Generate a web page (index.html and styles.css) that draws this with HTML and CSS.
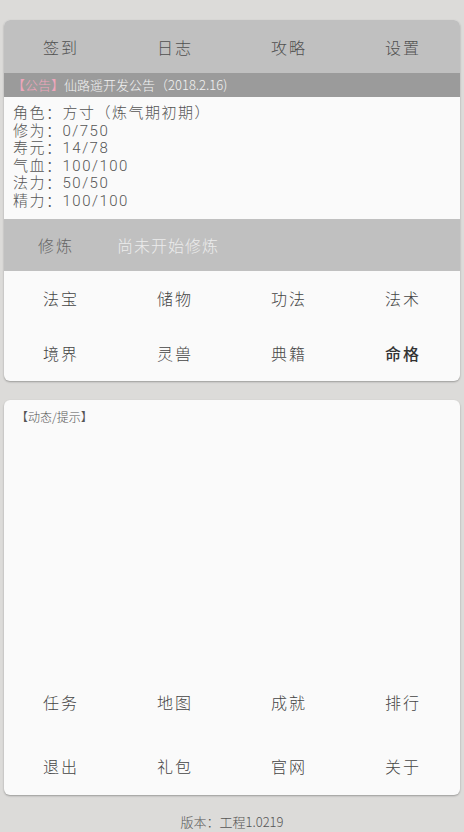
FILE: index.html
```html
<!doctype html>
<html lang="zh">
<head>
	<meta charset="UTF-8" />
	<title>仙路遥</title>
<link rel="stylesheet" href="styles.css">
</head>
<body>
	<section class="card main">
		<nav class="tabs">
			<a href="javascript:;">签到</a>
			<a href="javascript:;">日志</a>
			<a href="javascript:;">攻略</a>
			<a href="javascript:;">设置</a>
		</nav>
		<div class="notice"><span class="tag">【公告】</span>仙路遥开发公告（2018.2.16)</div>
		<ul class="stats">
			<li>角色：方寸（炼气期初期）</li>
			<li>修为：0/750</li>
			<li>寿元：14/78</li>
			<li>气血：100/100</li>
			<li>法力：50/50</li>
			<li>精力：100/100</li>
		</ul>
		<div class="practice">
			<span class="label">修炼</span>
			<span class="state">尚未开始修炼</span>
		</div>
		<div class="menu">
			<a href="javascript:;">法宝</a>
			<a href="javascript:;">储物</a>
			<a href="javascript:;">功法</a>
			<a href="javascript:;">法术</a>
			<a href="javascript:;">境界</a>
			<a href="javascript:;">灵兽</a>
			<a href="javascript:;">典籍</a>
			<a href="javascript:;" class="strong">命格</a>
		</div>
	</section>

	<section class="card log">
		<p class="log-title">【动态/提示】</p>
		<div class="log-body"></div>
		<div class="menu low">
			<a href="javascript:;">任务</a>
			<a href="javascript:;">地图</a>
			<a href="javascript:;">成就</a>
			<a href="javascript:;">排行</a>
			<a href="javascript:;">退出</a>
			<a href="javascript:;">礼包</a>
			<a href="javascript:;">官网</a>
			<a href="javascript:;">关于</a>
		</div>
	</section>

	<p class="version">版本：工程1.0219</p>
</body>
</html>
```

FILE: styles.css
```css
body,ul,li,p{
	margin: 0;
	padding: 0;
}
body{
	background: #dcdbd9;
	font-family: "Noto Sans CJK SC", "Noto Sans", sans-serif;
	font-weight: 300;
	color: #555;
	padding-top: 20px;
}
a{
	color: #4a4a4a;
	text-decoration: none;
}
.card{
	margin: 0 4px;
	background: #fafafa;
	border-radius: 6px;
	overflow: hidden;
	box-shadow: 0 1px 2px rgba(0,0,0,.3);
}
.tabs{
	display: grid;
	grid-template-columns: repeat(4, 1fr);
	height: 53px;
	background: #c0c0c0;
}
.tabs a{
	text-align: center;
	line-height: 55px;
	font-size: 16px;
	color: #505050;
	letter-spacing: 2px;
}
.notice{
	height: 24px;
	line-height: 24px;
	background: #9b9b9b;
	color: #f3f3f3;
	font-size: 13px;
	padding-left: 8px;
}
.notice .tag{
	color: #efa6bb;
}
.stats{
	list-style: none;
	padding: 8px 9px 8px;
	font-family: Roboto, "Noto Sans CJK SC", sans-serif;
}
.stats li{
	font-size: 15px;
	line-height: 17.6px;
	height: 17.6px;
	letter-spacing: 1.5px;
	color: #555;
}
.practice{
	display: flex;
	align-items: center;
	height: 52px;
	background: #c0c0c0;
	font-size: 16px;
}
.practice .label{
	margin-left: 34px;
	color: #666;
	letter-spacing: 2px;
}
.practice .state{
	margin-left: 43px;
	color: #ececec;
	letter-spacing: 1px;
}
.menu{
	display: grid;
	grid-template-columns: repeat(4, 1fr);
	grid-auto-rows: 55px;
}
.menu a{
	text-align: center;
	line-height: 54px;
	font-size: 16px;
	letter-spacing: 2px;
	color: #444;
}
.menu a.strong{
	font-weight: 500;
	color: #333;
}
.log{
	margin-top: 19px;
	height: 395px;
	display: flex;
	flex-direction: column;
}
.log-title{
	font-size: 12px;
	color: #555;
	line-height: 16px;
	padding: 9px 0 0 12px;
}
.log-body{
	flex: 1;
}
.menu.low{
	grid-auto-rows: 64px;
}
.menu.low a{
	line-height: 20px;
	padding-top: 25px;
}
.version{
	text-align: center;
	font-size: 13px;
	line-height: 20px;
	margin-top: 17px;
	color: #555;
}
```
